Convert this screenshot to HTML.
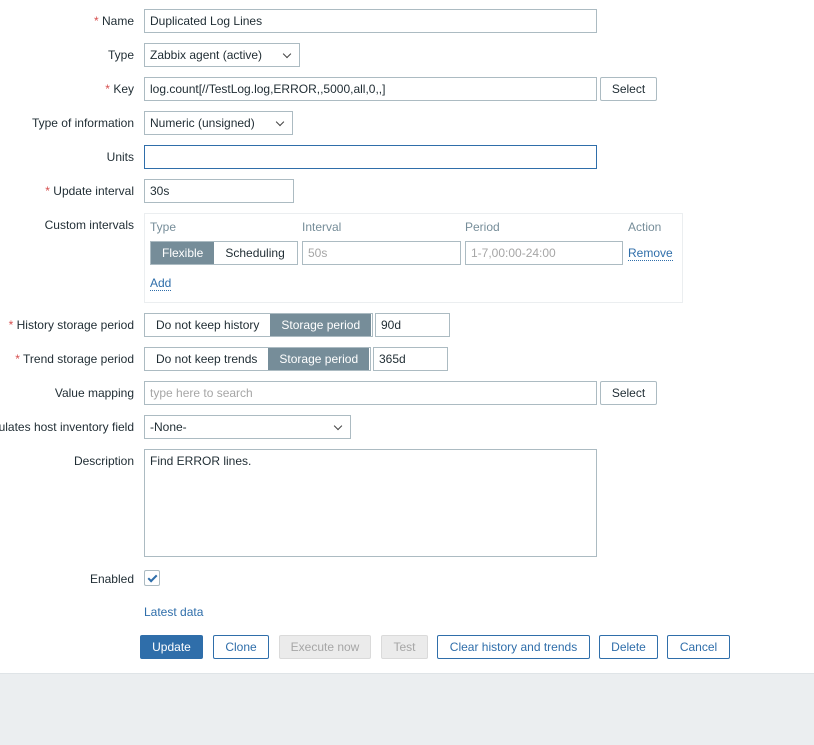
<!DOCTYPE html>
<html><head><style>
*{box-sizing:border-box;margin:0;padding:0}
body{width:814px;height:745px;background:#fff;font:12px "Liberation Sans",Arial,sans-serif;color:#1f2c33;position:relative;overflow:hidden}
.a{position:absolute}
.lbl{position:absolute;right:680px;white-space:nowrap;text-align:right;line-height:14px;margin-top:1px}
.req:before{content:"* ";color:#d64e4e}
.in{position:absolute;border:1px solid #acbbc2;background:#fff;height:24px;line-height:22px;padding-left:5px;white-space:nowrap;overflow:hidden}
.sel:after{content:"";position:absolute;right:9px;top:7px;width:5px;height:5px;border-right:1px solid #444;border-bottom:1px solid #444;transform:rotate(45deg)}
.btn{position:absolute;height:24px;line-height:22px;border:1px solid #2f6eaa;color:#2f6eaa;background:#fff;text-align:center;border-radius:2px}
.dis{border-color:#dadada;background:#ebebeb;color:#a6a6a6}
.seg{position:absolute;display:flex;border:1px solid #acbbc2;height:24px;line-height:22px}
.seg span{padding:0 11px}
.seg .on{background:#768d99;color:#fff}
.ph{color:#a6a6a6}
.lnk{color:#2f6eaa}
</style></head><body>
<div class="lbl req" style="top:13px">Name</div>
<div class="in" style="left:144px;top:9px;width:453px">Duplicated Log Lines</div>
<div class="lbl" style="top:47px">Type</div>
<div class="in sel" style="left:144px;top:43px;width:156px">Zabbix agent (active)</div>
<div class="lbl req" style="top:81px">Key</div>
<div class="in" style="left:144px;top:77px;width:453px">log.count[//TestLog.log,ERROR,,5000,all,0,,]</div>
<div class="btn" style="left:600px;top:77px;width:57px;border-color:#acbbc2;color:#1f2c33">Select</div>
<div class="lbl" style="top:115px">Type of information</div>
<div class="in sel" style="left:144px;top:111px;width:149px">Numeric (unsigned)</div>
<div class="lbl" style="top:149px">Units</div>
<div class="in" style="left:144px;top:145px;width:453px;border-color:#2f6eaa"></div>
<div class="lbl req" style="top:183px">Update interval</div>
<div class="in" style="left:144px;top:179px;width:150px">30s</div>
<div class="lbl" style="top:217px">Custom intervals</div>
<div class="a" style="left:144px;top:213px;width:539px;height:90px;border:1px solid #ebeef0"></div>
<div class="a ph" style="left:150px;top:220px;color:#768d99">Type</div>
<div class="a" style="left:302px;top:220px;color:#768d99">Interval</div>
<div class="a" style="left:465px;top:220px;color:#768d99">Period</div>
<div class="a" style="left:628px;top:220px;color:#768d99">Action</div>
<div class="seg" style="left:150px;top:241px;width:148px"><span class="on">Flexible</span><span>Scheduling</span></div>
<div class="in ph" style="left:302px;top:241px;width:159px">50s</div>
<div class="in ph" style="left:465px;top:241px;width:158px">1-7,00:00-24:00</div>
<div class="a lnk" style="left:628px;top:246px;border-bottom:1px dotted #2f6eaa">Remove</div>
<div class="a lnk" style="left:150px;top:276px;border-bottom:1px dotted #2f6eaa">Add</div>
<div class="lbl req" style="top:317px">History storage period</div>
<div class="seg" style="left:144px;top:313px;width:229px"><span>Do not keep history</span><span class="on">Storage period</span></div>
<div class="in" style="left:375px;top:313px;width:75px">90d</div>
<div class="lbl req" style="top:351px">Trend storage period</div>
<div class="seg" style="left:144px;top:347px;width:227px"><span>Do not keep trends</span><span class="on">Storage period</span></div>
<div class="in" style="left:373px;top:347px;width:75px">365d</div>
<div class="lbl" style="top:385px">Value mapping</div>
<div class="in ph" style="left:144px;top:381px;width:453px">type here to search</div>
<div class="btn" style="left:600px;top:381px;width:57px;border-color:#acbbc2;color:#1f2c33">Select</div>
<div class="lbl" style="top:419px">Populates host inventory field</div>
<div class="in sel" style="left:144px;top:415px;width:207px">-None-</div>
<div class="lbl" style="top:453px">Description</div>
<div class="in" style="left:144px;top:449px;width:453px;height:108px;line-height:22px">Find ERROR lines.</div>
<div class="lbl" style="top:571px">Enabled</div>
<div class="a" style="left:144px;top:570px;width:16px;height:16px;border:1px solid #acbbc2;border-radius:2px"><div class="a" style="left:5px;top:2px;width:5px;height:9px;border-right:2px solid #2f6eaa;border-bottom:2px solid #2f6eaa;transform:rotate(45deg)"></div></div>
<div class="a lnk" style="left:144px;top:605px">Latest data</div>
<div class="btn" style="left:140px;top:635px;width:63px;background:#2f6eaa;color:#fff">Update</div>
<div class="btn" style="left:213px;top:635px;width:56px">Clone</div>
<div class="btn dis" style="left:279px;top:635px;width:92px">Execute now</div>
<div class="btn dis" style="left:381px;top:635px;width:47px">Test</div>
<div class="btn" style="left:437px;top:635px;width:153px">Clear history and trends</div>
<div class="btn" style="left:599px;top:635px;width:59px">Delete</div>
<div class="btn" style="left:667px;top:635px;width:63px">Cancel</div>
<div class="a" style="left:0;top:673px;width:814px;height:72px;background:#ebeef0;border-top:1px solid #dfe4e7"></div>
</body></html>
